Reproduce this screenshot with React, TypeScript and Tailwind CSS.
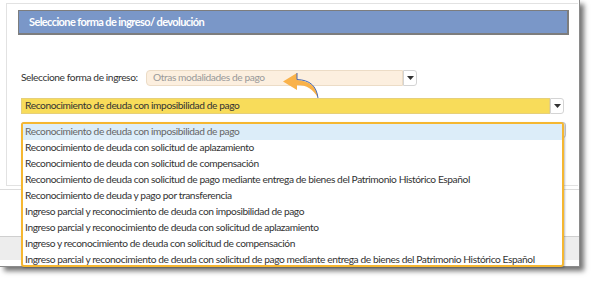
import React from 'react';

const options = [
  'Reconocimiento de deuda con imposibilidad de pago',
  'Reconocimiento de deuda con solicitud de aplazamiento',
  'Reconocimiento de deuda con solicitud de compensación',
  'Reconocimiento de deuda con solicitud de pago mediante entrega de bienes del Patrimonio Histórico Español',
  'Reconocimiento de deuda y pago por transferencia',
  'Ingreso parcial y reconocimiento de deuda con imposibilidad de pago',
  'Ingreso parcial y reconocimiento de deuda con solicitud de aplazamiento',
  'Ingreso y reconocimiento de deuda con solicitud de compensación',
  'Ingreso parcial y reconocimiento de deuda con solicitud de pago mediante entrega de bienes del Patrimonio Histórico Español',
];

const Caret: React.FC = () => (
  <svg width="7" height="4" viewBox="0 0 7 4">
    <path d="M0 0 H7 L3.5 4 Z" fill="#333" />
  </svg>
);

const SelectButton: React.FC = () => (
  <div className="flex h-full w-[14px] items-center justify-center rounded-r-[3px] border border-[#d4d4d4] bg-white">
    <Caret />
  </div>
);

const CurvedArrow: React.FC = () => (
  <svg className="absolute left-[280px] top-[68px]" width="42" height="32" viewBox="0 0 42 32">
    <path
      d="M38 30 C37 19 30 13 17 12 L17 5 L3 13.5 L17 22 L17 17 C27 17 33 21 38 30 Z"
      fill="#f9b24a"
    />
    <path d="M17 5 L17 11.5 C30 12 36.5 18 38 30" fill="none" stroke="#4a6bb5" strokeWidth="1" />
  </svg>
);

const App: React.FC = () => {
  return (
    <div
      className="h-[281px] w-[591px] bg-white tracking-[-0.4px]"
      style={{ fontFamily: 'Lato, "Liberation Sans", sans-serif' }}
    >
      <div className="relative h-[267px] w-[580px] border-r border-b border-[#8a8a8a] bg-white shadow-[4px_4px_5px_rgba(0,0,0,0.55)]">
        {/* card */}
        <div className="ml-[6px] pt-[3px]">
          <div className="h-[183px] w-[572px] border-t border-l border-b border-[#e2e2e2] pl-[11px] pt-[6px]">
            <div className="flex h-[25px] w-[551px] items-center border border-r-2 border-b-2 border-[#7d7d7d] bg-[#7a97c8] pl-[10px] text-[11px] font-bold tracking-[-0.6px] text-white">
              Seleccione forma de ingreso/ devolución
            </div>

            <div className="mt-[35px] ml-[3px] flex h-[16px] items-center">
              <span className="w-[125px] whitespace-nowrap text-[10.2px] text-[#333]">Seleccione forma de ingreso:</span>
              <div className="flex h-full w-[257px] items-center rounded-l-[4px] border border-[#ecdcc6] bg-[#fcefdf] pl-[6px] text-[10.2px] text-[#9a9a9a]">
                Otras modalidades de pago
              </div>
              <SelectButton />
            </div>

            <div className="mt-[12px] ml-[3px] flex h-[16px] items-center">
              <div className="flex h-full w-[529px] items-center border border-[#e6d07a] bg-[#f8dc5a] pl-[3px] text-[10.2px] text-[#333]">
                Reconocimiento de deuda con imposibilidad de pago
              </div>
              <SelectButton />
            </div>

            <div className="mt-[8px] ml-[3px] h-[16px] w-[545px] rounded-[3px] border border-[#c8c8c8] bg-white" />
          </div>
        </div>

        <div className="mt-[3px] border-t border-[#dcdcdc]" />
        <div className="mt-[46px] h-[24px] border-t border-[#cfcfcf] bg-[#ededed]" />

        <CurvedArrow />

        {/* open dropdown */}
        <div className="absolute left-[21px] top-[122px] h-[145px] w-[543px] overflow-hidden rounded-[3px] border-2 border-[#f5b731] bg-white shadow-[1px_1px_2px_rgba(0,0,0,0.25)]">
          {options.map((opt, i) => (
            <div
              key={i}
              className={`flex h-[16px] items-center pl-[2px] text-[10.2px] whitespace-nowrap ${
                i === 0 ? 'bg-[#dcedf9] text-[#666]' : 'text-[#333]'
              }`}
            >
              {opt}
            </div>
          ))}
        </div>
      </div>
    </div>
  );
};

export default App;
